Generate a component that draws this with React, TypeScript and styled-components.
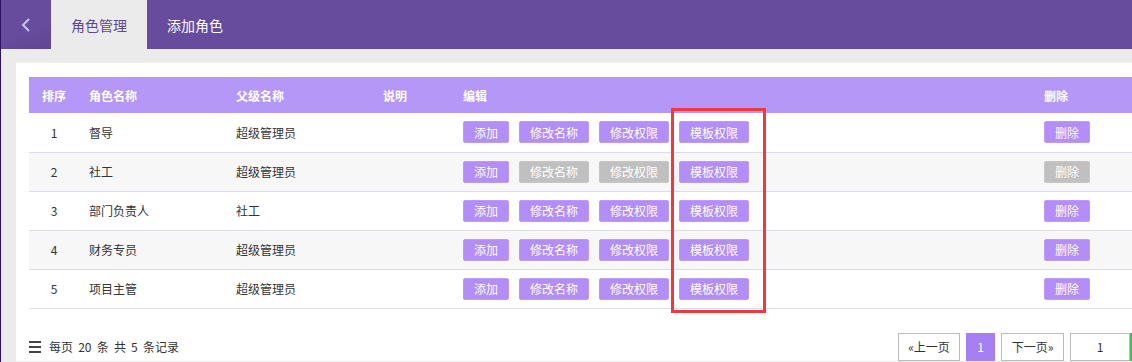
import React from "react";
import styled, { createGlobalStyle } from "styled-components";

const Global = createGlobalStyle`
  html, body { margin: 0; padding: 0; overflow: hidden; background: #ebebeb; }
  body { font-family: "Noto Sans CJK SC", "Noto Sans", sans-serif; color: #333; }
  * { box-sizing: border-box; }
`;

const Page = styled.div`
  width: 1200px;
  min-height: 362px;
  border-left: 1px solid #2b1263;
  background: #ebebeb;
`;

const TopBar = styled.div`
  display: flex;
  height: 49px;
  background: #674c9d;
`;

const BackButton = styled.div`
  width: 50px;
  display: flex;
  align-items: center;
  justify-content: center;
  background: linear-gradient(160deg, #674c9d 60%, #5f4593 100%);
`;

const Tab = styled.div<{ $active?: boolean }>`
  display: flex;
  align-items: center;
  padding: 0 20px;
  font-size: 14px;
  background: ${(p) => (p.$active ? "#ebebeb" : "transparent")};
  color: ${(p) => (p.$active ? "#5e4697" : "#ffffff")};
`;

const Card = styled.div`
  margin: 14px 16px 0 15px;
  background: #fff;
  padding: 14px 13px 0;
`;

const TableWrap = styled.div`
  position: relative;
`;

const Table = styled.table`
  width: 100%;
  border-collapse: collapse;
  table-layout: fixed;
  font-size: 12px;
`;

const Th = styled.th<{ $center?: boolean }>`
  height: 36px;
  padding: 0 10px;
  background: #b597f8;
  color: #fff;
  font-weight: bold;
  text-align: ${(p) => (p.$center ? "center" : "left")};
`;

const Tr = styled.tr<{ $alt?: boolean }>`
  background: ${(p) => (p.$alt ? "#f7f7f7" : "#fff")};
  border-bottom: 1px solid #dedaf0;
`;

const Td = styled.td<{ $center?: boolean }>`
  height: 39px;
  padding: 0 10px;
  color: #333;
  text-align: ${(p) => (p.$center ? "center" : "left")};
`;

const BtnGroup = styled.div`
  display: flex;
  gap: 10px;
`;

const Btn = styled.span<{ $disabled?: boolean; $wide?: boolean }>`
  display: inline-flex;
  align-items: center;
  justify-content: center;
  width: ${(p) => (p.$wide ? 70 : 46)}px;
  height: 22px;
  border-radius: 2px;
  font-size: 12px;
  color: #fff;
  background: ${(p) => (p.$disabled ? "#c0c0c0" : "#b28ef6")};
  border: 1px solid ${(p) => (p.$disabled ? "#c6c6c6" : "#bc9bf8")};
  white-space: nowrap;
`;

const Highlight = styled.div`
  position: absolute;
  left: 642px;
  top: 31px;
  width: 95px;
  height: 205px;
  border: 3px solid #f03a3a;
  pointer-events: none;
`;

const Footer = styled.div`
  display: flex;
  align-items: center;
  justify-content: space-between;
  margin-top: 24px;
  height: 28px;
`;

const Summary = styled.div`
  display: flex;
  align-items: center;
  gap: 8px;
  font-size: 12px;
  color: #333;
  word-spacing: 2.5px;
`;

const Pager = styled.div`
  display: flex;
  align-items: center;
  gap: 6px;
`;

const PageBox = styled.span<{ $active?: boolean; $w: number }>`
  display: inline-flex;
  align-items: center;
  justify-content: center;
  width: ${(p) => p.$w}px;
  height: 28px;
  font-size: 12px;
  border: 1px solid ${(p) => (p.$active ? "#a67ff3" : "#bbbbbb")};
  background: ${(p) => (p.$active ? "#a67ff3" : "#fff")};
  color: ${(p) => (p.$active ? "#fff" : "#333")};
`;

const GoButton = styled.span`
  display: inline-flex;
  width: 41px;
  height: 28px;
  margin-left: -6px;
  background: #4cbb5c;
`;

const rows = [
  { id: 1, name: "督导", parent: "超级管理员", disabled: false },
  { id: 2, name: "社工", parent: "超级管理员", disabled: true },
  { id: 3, name: "部门负责人", parent: "社工", disabled: false },
  { id: 4, name: "财务专员", parent: "超级管理员", disabled: false },
  { id: 5, name: "项目主管", parent: "超级管理员", disabled: false },
];

export default function App() {
  return (
    <>
      <Global />
      <Page>
        <TopBar>
          <BackButton>
            <svg width="12" height="16" viewBox="0 0 12 16">
              <path d="M9 2 L3 8 L9 14" fill="none" stroke="#c9c2ea" strokeWidth="2" />
            </svg>
          </BackButton>
          <Tab $active>角色管理</Tab>
          <Tab>添加角色</Tab>
        </TopBar>
        <Card>
          <TableWrap>
            <Table>
              <colgroup>
                <col style={{ width: 50 }} />
                <col style={{ width: 147 }} />
                <col style={{ width: 147 }} />
                <col style={{ width: 80 }} />
                <col style={{ width: 581 }} />
                <col />
              </colgroup>
              <thead>
                <tr>
                  <Th $center>排序</Th>
                  <Th>角色名称</Th>
                  <Th>父级名称</Th>
                  <Th>说明</Th>
                  <Th>编辑</Th>
                  <Th>删除</Th>
                </tr>
              </thead>
              <tbody>
                {rows.map((r, i) => (
                  <Tr key={r.id} $alt={i % 2 === 1}>
                    <Td $center>{r.id}</Td>
                    <Td>{r.name}</Td>
                    <Td>{r.parent}</Td>
                    <Td></Td>
                    <Td>
                      <BtnGroup>
                        <Btn>添加</Btn>
                        <Btn $wide $disabled={r.disabled}>修改名称</Btn>
                        <Btn $wide $disabled={r.disabled}>修改权限</Btn>
                        <Btn $wide>模板权限</Btn>
                      </BtnGroup>
                    </Td>
                    <Td>
                      <Btn $disabled={r.disabled}>删除</Btn>
                    </Td>
                  </Tr>
                ))}
              </tbody>
            </Table>
            <Highlight />
          </TableWrap>
          <Footer>
            <Summary>
              <svg width="12" height="12" viewBox="0 0 12 12">
                <rect x="0" y="0" width="12" height="2" fill="#444" />
                <rect x="0" y="5" width="12" height="2" fill="#444" />
                <rect x="0" y="10" width="12" height="2" fill="#444" />
              </svg>
              <span>每页 20 条 共 5 条记录</span>
            </Summary>
            <Pager>
              <PageBox $w={62}>«上一页</PageBox>
              <PageBox $w={29} $active>1</PageBox>
              <PageBox $w={63}>下一页»</PageBox>
              <PageBox $w={60}>1</PageBox>
              <GoButton />
            </Pager>
          </Footer>
        </Card>
      </Page>
    </>
  );
}
